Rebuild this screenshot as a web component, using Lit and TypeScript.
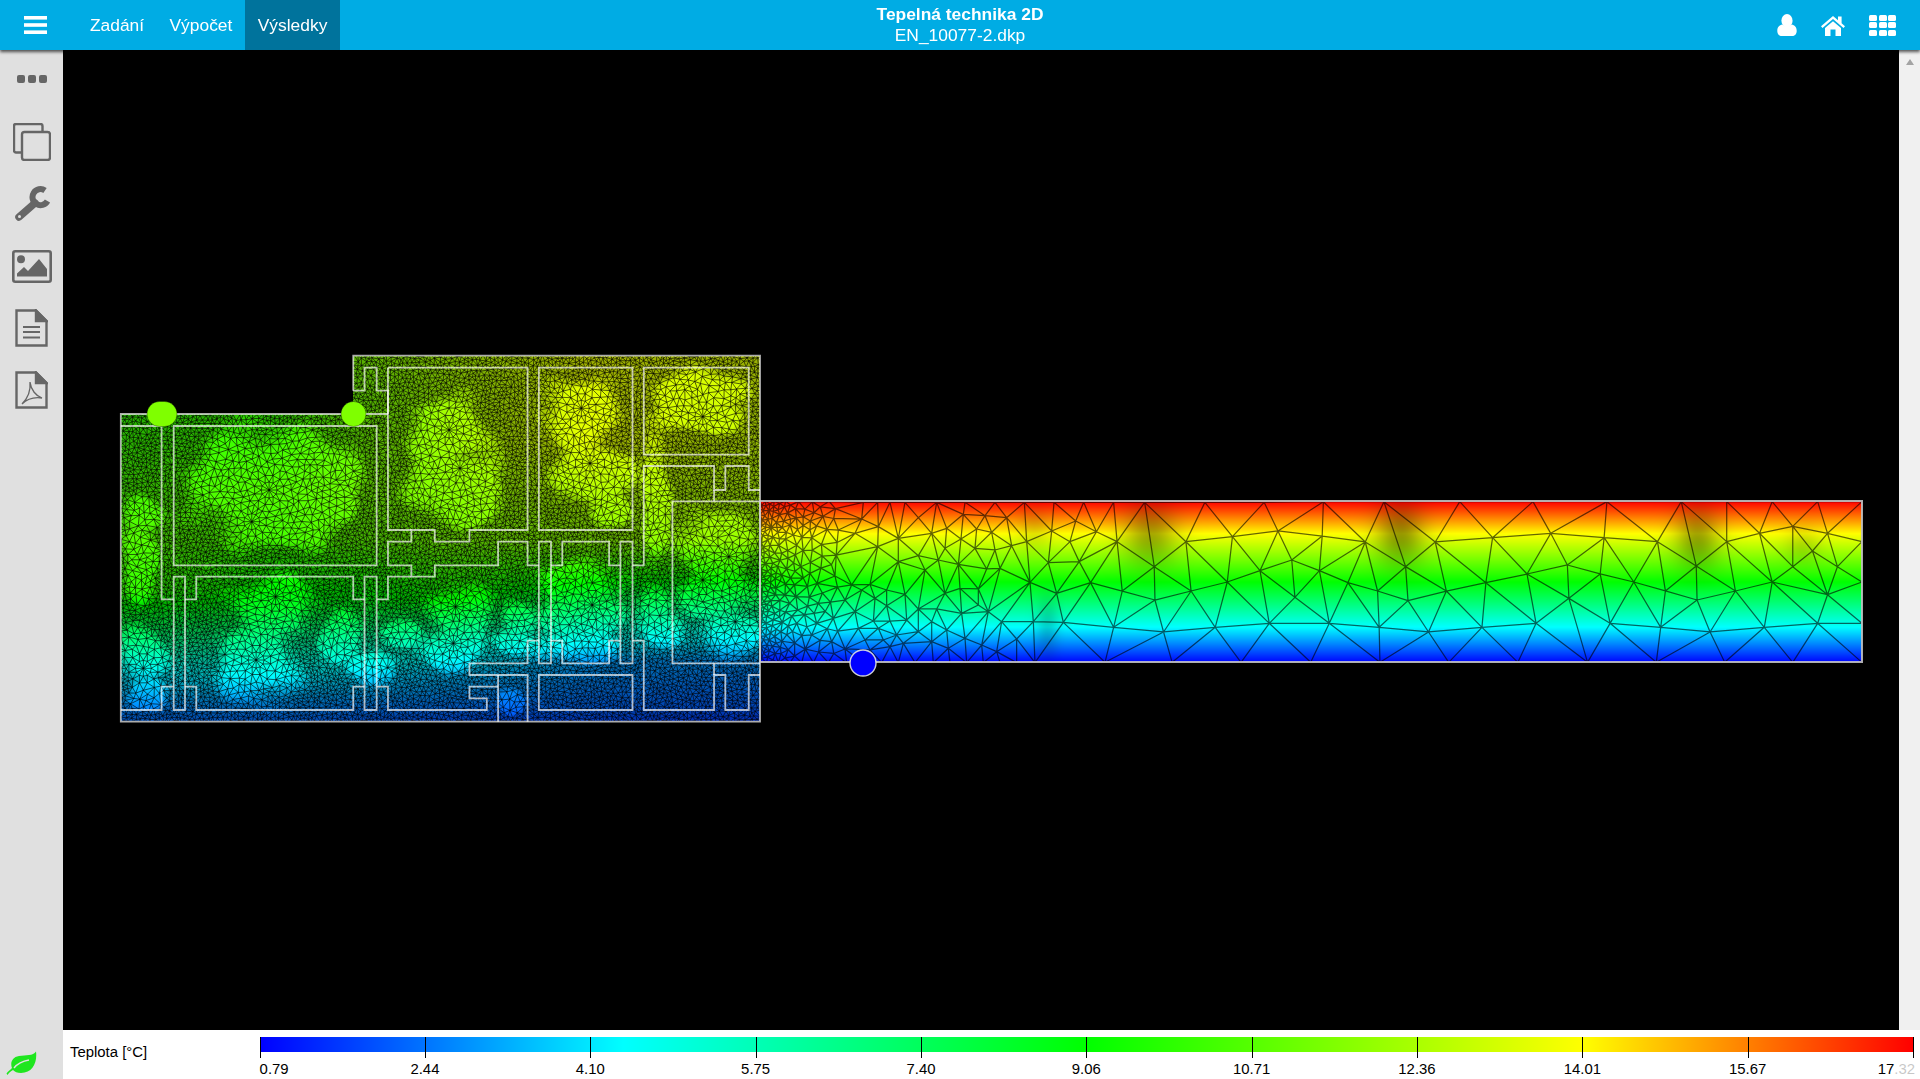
import { LitElement, html, css, svg } from 'lit';
import { customElement } from 'lit/decorators.js';

type P = [number, number];

// canvas origin on the page
const OX = 63;
const OY = 50;

// colour scale of the legend: blue, cyan, green, yellow, red
const STOPS: [number, number, number, number][] = [
  [0, 0, 0, 255],
  [0.22, 0, 255, 255],
  [0.5, 0, 255, 0],
  [0.8, 255, 255, 0],
  [1, 255, 0, 0],
];

function jet(u: number): [number, number, number] {
  if (u <= 0) return [0, 0, 255];
  if (u >= 1) return [255, 0, 0];
  for (let i = 1; i < STOPS.length; i++) {
    if (u <= STOPS[i][0]) {
      const a = STOPS[i - 1];
      const b = STOPS[i];
      const t = (u - a[0]) / (b[0] - a[0]);
      return [a[1] + (b[1] - a[1]) * t, a[2] + (b[2] - a[2]) * t, a[3] + (b[3] - a[3]) * t];
    }
  }
  return [255, 0, 0];
}

function rng(seed: number) {
  let s = seed;
  return () => {
    s = (s * 1664525 + 1013904223) >>> 0;
    return s / 4294967296;
  };
}

// sweep variant of Bowyer-Watson, returns the edges
function delaunay(input: P[]): P[][] {
  const r = rng(7);
  const pts: P[] = input.map((p) => [p[0] + (r() - 0.5) * 0.06, p[1] + (r() - 0.5) * 0.06]);
  pts.sort((a, b) => a[0] - b[0]);
  const n = pts.length;
  pts.push([-20000, -20000], [40000, -20000], [10000, 40000]);
  const circ = (i: number, j: number, k: number) => {
    const [ax, ay] = pts[i];
    const bx = pts[j][0] - ax;
    const by = pts[j][1] - ay;
    const cx = pts[k][0] - ax;
    const cy = pts[k][1] - ay;
    const d = 2 * (bx * cy - by * cx) || 1e-9;
    const ux = (cy * (bx * bx + by * by) - by * (cx * cx + cy * cy)) / d;
    const uy = (bx * (cx * cx + cy * cy) - cx * (bx * bx + by * by)) / d;
    return { i, j, k, x: ax + ux, y: ay + uy, r: ux * ux + uy * uy };
  };
  let open = [circ(n, n + 1, n + 2)];
  const closed: (typeof open)[number][] = [];
  for (let p = 0; p < n; p++) {
    const [px, py] = pts[p];
    const edges = new Map<number, [number, number]>();
    const next: typeof open = [];
    for (const t of open) {
      const dx = px - t.x;
      if (dx > 0 && dx * dx > t.r) {
        closed.push(t);
        continue;
      }
      const dy = py - t.y;
      if (dx * dx + dy * dy < t.r) {
        for (const [a, b] of [[t.i, t.j], [t.j, t.k], [t.k, t.i]]) {
          const key = Math.min(a, b) * 100000 + Math.max(a, b);
          if (edges.has(key)) edges.delete(key);
          else edges.set(key, [a, b]);
        }
      } else next.push(t);
    }
    edges.forEach(([a, b]) => next.push(circ(a, b, p)));
    open = next;
  }
  const out = new Map<number, P[]>();
  for (const t of closed.concat(open)) {
    if (t.i >= n || t.j >= n || t.k >= n) continue;
    for (const [a, b] of [[t.i, t.j], [t.j, t.k], [t.k, t.i]]) {
      out.set(Math.min(a, b) * 100000 + Math.max(a, b), [pts[a], pts[b]]);
    }
  }
  return [...out.values()];
}

// ---- strip on the right, nodes read off the picture ----
const B_X = (zx: number) => 100 + zx / 2.306;
const B_Y = (zy: number) => 340 + zy / 3;

const STRIP_Y0 = 501;
const STRIP_Y1 = 662;

function stripNodes(): P[] {
  const a: P[] = [];
  // left part, 3x crop at 755,495
  const n10: P[] = [
    [325, 22], [368, 22], [405, 22], [450, 22], [545, 22], [630, 22], [720, 22], [808, 22], [897, 22],
    [490, 68], [575, 100], [625, 58], [690, 62], [755, 68], [665, 102], [710, 112], [770, 152], [815, 140],
    [890, 108], [945, 140], [880, 203], [825, 262], [905, 295], [835, 380], [925, 382], [720, 165], [660, 160],
    [570, 160], [618, 132], [530, 115], [490, 182], [430, 130], [368, 155], [370, 95], [320, 72], [300, 115],
    [250, 105], [430, 200], [550, 195], [610, 208], [695, 222], [735, 220], [670, 282], [615, 280], [570, 295],
    [510, 225], [450, 298], [395, 332], [490, 342], [545, 342], [620, 355], [360, 310], [320, 285], [240, 243],
    [290, 270], [270, 315], [345, 268], [395, 285], [300, 350], [355, 378], [405, 378], [455, 375], [530, 380],
    [575, 405], [630, 430], [680, 450], [725, 470], [785, 432], [740, 380], [700, 350], [670, 330], [490, 410],
    [425, 420], [370, 400], [330, 435], [385, 435], [345, 465], [405, 455], [445, 445], [530, 440], [580, 460],
    [270, 462], [310, 400], [235, 370], [190, 325], [165, 235], [128, 345], [95, 222], [115, 120], [185, 385],
    [230, 440], [170, 420], [125, 385], [90, 300],
    [840, 503], [785, 503], [735, 503], [685, 503], [635, 503], [585, 503], [535, 503], [480, 503], [430, 503],
    [380, 503], [325, 503], [275, 503], [220, 503], [175, 503], [140, 503], [105, 503], [70, 503], [35, 503],
  ];
  for (const [x, y] of n10) a.push([755 + x / 3, 495 + y / 3]);
  // middle, crop at 740,480 (x is 2.904 times, y is 3 times)
  const n7: P[] = [
    [998, 67], [1085, 67], [1175, 67], [1350, 67], [1522, 67],
    [975, 123], [1035, 155], [1095, 185], [985, 245], [1018, 308], [1110, 333], [1203, 260], [1205, 360],
    [1085, 442], [1230, 456], [1295, 185], [1430, 170], [1310, 333], [1415, 306], [1510, 272], [1380, 442],
    [1537, 430], [1060, 547], [1255, 547], [1455, 547],
  ];
  for (const [x, y] of n7) a.push([740 + x / 2.904, 480 + y / 3]);
  // right end, crop at 1270,480 (x is 2.529 times, y is 3 times)
  const n8: P[] = [
    [135, 65], [288, 65], [480, 65], [665, 65], [852, 65], [1040, 65], [1155, 65], [1270, 65], [1385, 65], [1497, 65],
    [103, 547], [278, 547], [452, 547], [627, 547], [803, 547], [977, 547], [1150, 547], [1322, 547], [1497, 547],
    [20, 153], [132, 168], [241, 186], [55, 240], [125, 272], [343, 260], [418, 186], [563, 173], [710, 160],
    [845, 173], [980, 185], [752, 255], [650, 282], [835, 282], [197, 308], [272, 333], [349, 362], [446, 333],
    [546, 308], [756, 355], [920, 306], [1000, 333], [1080, 360], [1078, 258], [1155, 185], [1238, 160], [1322, 139],
    [1410, 160], [1372, 213], [1322, 260], [1435, 260], [1497, 185], [1270, 306], [1177, 333], [1410, 344], [1497, 306],
    [63, 352], [150, 430], [276, 442], [401, 456], [536, 442], [673, 430], [860, 430], [988, 442], [1113, 456],
    [1250, 442], [1385, 430], [1497, 430],
  ];
  for (const [x, y] of n8) a.push([1270 + x / 2.529, 480 + y / 3]);
  a.push([760, STRIP_Y0], [760, STRIP_Y1]);

  // fine graded part next to the building
  const r = rng(11);
  for (let i = 0; i < 14000; i++) {
    const x = 760 + r() * 78;
    const y = STRIP_Y0 + r() * (STRIP_Y1 - STRIP_Y0);
    const top = y < 530 ? 1 : 0;
    const k = top ? (x - 760) / 95 : (x - 760) / 66;
    const rad = 3.6 + Math.min(1, k) * 7;
    if (a.every((p) => (p[0] - x) ** 2 + (p[1] - y) ** 2 > rad * rad)) a.push([x, y]);
  }
  return a;
}

const STRIP_SHADE: [number, number, number, number, number][] = [
  [1150, 533, 26, 30, 0.34],
  [1400, 533, 24, 30, 0.4],
  [1697, 537, 22, 30, 0.36],
  [1802, 545, 18, 18, 0.14],
  [1034, 527, 16, 20, 0.12],
  [1047, 628, 11, 30, 0.18],
];

// ---- building ----
// bright spots of the mesh in crop coordinates: x, y, rx, ry
const BLOBS: [number, number, number, number][] = [
  [360, 430, 150, 170], [480, 440, 120, 170], [400, 560, 90, 70], [560, 480, 40, 70],
  [800, 280, 100, 110], [820, 430, 110, 110], [860, 510, 70, 50],
  [1110, 220, 90, 110], [1140, 400, 90, 90], [1180, 510, 50, 50],
  [1380, 160, 100, 70], [1380, 230, 110, 50],
  [90, 650, 40, 130], [100, 530, 45, 60],
  [360, 960, 95, 130], [400, 800, 100, 90],
  [830, 820, 70, 90], [810, 920, 80, 70], [1100, 730, 100, 70], [1110, 830, 90, 80],
  [1420, 620, 95, 110], [1420, 760, 90, 80], [1450, 880, 70, 70],
  [100, 940, 50, 90], [110, 1050, 40, 40],
  [1280, 480, 35, 170], [1280, 800, 40, 60], [960, 840, 40, 60],
  [1100, 920, 100, 50], [1290, 860, 50, 60], [950, 900, 50, 40],
  [950, 1090, 30, 40], [560, 900, 50, 80], [700, 880, 50, 40],
  [100, 1080, 45, 30], [620, 980, 60, 50],
];

const SPOKES: P[] = [
  [390, 450], [350, 545], [805, 270], [830, 385], [1110, 205], [1130, 370], [360, 960], [405, 770],
  [1390, 230], [1450, 650], [1390, 720], [1465, 845], [815, 910], [820, 800], [1135, 795], [100, 985],
];

function blobWeight(x: number, y: number) {
  const zx = (x - 100) * 2.306;
  const zy = (y - 340) * 3;
  // wavy edge, so the patches don't read as balloons
  const wob = 0.14 * Math.sin(x * 0.09 + y * 0.05) + 0.1 * Math.sin(y * 0.13 - x * 0.07);
  let w = 0.2;
  for (const [cx, cy, rx, ry] of BLOBS) {
    const d = Math.hypot((zx - cx) / rx, (zy - cy) / ry) + wob;
    const v = d < 0.75 ? 1 : d < 1.3 ? (1.3 - d) / 0.55 : 0;
    if (v > w) w = v;
  }
  return w;
}

function buildingNodes(): P[] {
  const cell = 8;
  const grid = new Map<number, P[]>();
  const all: P[] = [];
  const add = (p: P) => {
    const k = Math.floor(p[0] / cell) * 10000 + Math.floor(p[1] / cell);
    if (!grid.has(k)) grid.set(k, []);
    grid.get(k)!.push(p);
    all.push(p);
  };
  const free = (x: number, y: number, rad: number) => {
    const cx = Math.floor(x / cell);
    const cy = Math.floor(y / cell);
    for (let i = cx - 1; i <= cx + 1; i++) {
      for (let j = cy - 1; j <= cy + 1; j++) {
        for (const p of grid.get(i * 10000 + j) ?? []) {
          if ((p[0] - x) ** 2 + (p[1] - y) ** 2 < rad * rad) return false;
        }
      }
    }
    return true;
  };
  // fans round the spots where many triangles meet
  for (const [zx, zy] of SPOKES) {
    const cx = B_X(zx);
    const cy = B_Y(zy);
    add([cx, cy]);
    for (let ring = 0; ring < 3; ring++) {
      const count = 12;
      const rad = 8 + ring * 7;
      for (let i = 0; i < count; i++) {
        const a = ((i + (ring % 2) / 2) / count) * Math.PI * 2;
        const x = cx + Math.cos(a) * rad;
        const y = cy + Math.sin(a) * rad;
        if (free(x, y, 4)) add([x, y]);
      }
    }
  }
  const r = rng(3);
  for (let i = 0; i < 200000; i++) {
    const x = 119 + r() * 644;
    const y = 354 + r() * 370;
    if (x < 351 && y < 412) continue;
    if (free(x, y, 2.9 + blobWeight(x, y) * 2.6)) add([x, y]);
  }
  return all;
}

// temperature columns of the building, in crop coordinates
const COLS: [number, P[]][] = [
  [100, [[50, 0.6], [222, 0.56], [600, 0.6], [750, 0.56], [900, 0.36], [1000, 0.21], [1100, 0.12], [1145, 0.09]]],
  [400, [[50, 0.6], [222, 0.56], [450, 0.6], [600, 0.58], [800, 0.46], [960, 0.27], [1080, 0.14], [1145, 0.09]]],
  [800, [[50, 0.7], [300, 0.69], [600, 0.64], [780, 0.5], [900, 0.3], [1000, 0.17], [1100, 0.1], [1145, 0.07]]],
  [1120, [[50, 0.77], [300, 0.77], [600, 0.66], [730, 0.5], [880, 0.26], [960, 0.14], [1100, 0.09], [1145, 0.06]]],
  [1400, [[50, 0.76], [300, 0.74], [600, 0.68], [720, 0.5], [880, 0.24], [960, 0.13], [1100, 0.08], [1145, 0.05]]],
];

function col(tbl: P[], zy: number) {
  if (zy <= tbl[0][0]) return tbl[0][1];
  for (let i = 1; i < tbl.length; i++) {
    if (zy <= tbl[i][0]) {
      const t = (zy - tbl[i - 1][0]) / (tbl[i][0] - tbl[i - 1][0]);
      return tbl[i - 1][1] + (tbl[i][1] - tbl[i - 1][1]) * t;
    }
  }
  return tbl[tbl.length - 1][1];
}

function buildingTemp(x: number, y: number) {
  const zx = (x - 100) * 2.306;
  const zy = (y - 340) * 3;
  if (zx <= COLS[0][0]) return col(COLS[0][1], zy);
  for (let i = 1; i < COLS.length; i++) {
    if (zx <= COLS[i][0]) {
      const t = (zx - COLS[i - 1][0]) / (COLS[i][0] - COLS[i - 1][0]);
      return col(COLS[i - 1][1], zy) * (1 - t) + col(COLS[i][1], zy) * t;
    }
  }
  return col(COLS[COLS.length - 1][1], zy);
}

// wall outlines, crop coordinates of the building picture
const WALLS: [number[], boolean?][] = [
  [[584, 152, 584, 47, 1522, 47, 1522, 1145, 48, 1145, 48, 222, 664, 222]],
  [[170, 258, 638, 258, 638, 676, 170, 676], true],
  [[48, 258, 142, 258, 142, 778, 170, 778]],
  [[196, 778, 222, 778, 222, 710, 584, 710, 584, 778, 610, 778]],
  [[638, 778, 664, 778, 664, 710, 718, 710]],
  [[584, 152, 610, 152, 610, 83, 638, 83, 638, 152, 664, 152, 664, 222]],
  [[664, 83, 986, 83, 986, 570, 852, 570, 852, 605, 772, 605, 772, 570, 718, 570, 718, 605, 664, 605, 664, 676, 718, 676, 718, 710, 772, 710, 772, 676, 918, 676, 918, 605, 986, 605, 986, 676, 1012, 676]],
  [[664, 83, 664, 570, 718, 570]],
  [[170, 710, 196, 710, 196, 1110, 170, 1110], true],
  [[610, 710, 638, 710, 638, 1110, 610, 1110], true],
  [[1012, 605, 1040, 605, 1040, 970, 1012, 970], true],
  [[1200, 605, 1228, 605, 1228, 970, 1200, 970], true],
  [[1012, 83, 1228, 83, 1228, 570, 1012, 570], true],
  [[1254, 83, 1496, 83, 1496, 344, 1254, 344], true],
  [[1522, 450, 1496, 450, 1496, 378, 1442, 378, 1442, 450, 1416, 450, 1416, 378, 1254, 378, 1254, 676, 1228, 676]],
  [[1200, 676, 1174, 676, 1174, 605, 1066, 605, 1066, 676, 1040, 676]],
  [[1416, 450, 1416, 484]],
  [[1522, 484, 1320, 484, 1320, 970, 1522, 970]],
  [[1012, 902, 986, 902, 986, 970, 852, 970, 852, 1005, 986, 1005, 986, 1145]],
  [[918, 1005, 918, 1145]],
  [[1040, 902, 1066, 902, 1066, 970, 1174, 970, 1174, 902, 1200, 902]],
  [[1228, 902, 1254, 902, 1254, 1110, 1416, 1110, 1416, 1005, 1442, 1005, 1442, 1110, 1496, 1110, 1496, 1005, 1522, 1005]],
  [[1416, 970, 1416, 1005]],
  [[1012, 1005, 1228, 1005, 1228, 1110, 1012, 1110], true],
  [[918, 1040, 852, 1040, 852, 1075, 892, 1075, 892, 1110, 664, 1110, 664, 1040, 638, 1040]],
  [[610, 1040, 584, 1040, 584, 1110, 222, 1110, 222, 1040, 196, 1040]],
  [[170, 1040, 142, 1040, 142, 1110, 48, 1110]],
];

function drawPlot(ctx: CanvasRenderingContext2D) {
  ctx.fillStyle = '#000';
  ctx.fillRect(0, 0, ctx.canvas.width, ctx.canvas.height);
  ctx.translate(-OX, -OY);

  const paintField = (x0: number, y0: number, w: number, h: number, fn: (x: number, y: number) => [number, number, number]) => {
    const off = document.createElement('canvas');
    off.width = w;
    off.height = h;
    const c = off.getContext('2d')!;
    const img = c.createImageData(w, h);
    for (let j = 0; j < h; j++) {
      for (let i = 0; i < w; i++) {
        const col = fn(x0 + i, y0 + j);
        const o = (j * w + i) * 4;
        img.data[o] = col[0];
        img.data[o + 1] = col[1];
        img.data[o + 2] = col[2];
        img.data[o + 3] = 255;
      }
    }
    c.putImageData(img, 0, 0);
    ctx.drawImage(off, x0, y0);
  };

  const strokeEdges = (edges: P[][], width: number, alpha: number) => {
    ctx.beginPath();
    for (const [a, b] of edges) {
      ctx.moveTo(a[0], a[1]);
      ctx.lineTo(b[0], b[1]);
    }
    ctx.lineWidth = width;
    ctx.strokeStyle = `rgba(0,0,0,${alpha})`;
    ctx.stroke();
  };

  // building
  ctx.save();
  ctx.beginPath();
  ctx.moveTo(121, 414);
  ctx.lineTo(353, 414);
  ctx.lineTo(353, 356);
  ctx.lineTo(760, 356);
  ctx.lineTo(760, 721);
  ctx.lineTo(121, 721);
  ctx.closePath();
  ctx.clip();
  paintField(120, 355, 642, 368, (x, y) => {
    const c = jet(buildingTemp(x, y));
    const f = 0.62 + 0.38 * blobWeight(x, y);
    return [c[0] * f, c[1] * f, c[2] * f];
  });
  strokeEdges(delaunay(buildingNodes()), 1, 0.62);
  ctx.restore();

  // strip
  ctx.save();
  ctx.beginPath();
  ctx.rect(760, STRIP_Y0, 1102, STRIP_Y1 - STRIP_Y0);
  ctx.clip();
  paintField(760, STRIP_Y0, 1102, STRIP_Y1 - STRIP_Y0 + 1, (x, y) => {
    const c = jet((STRIP_Y1 - y) / (STRIP_Y1 - STRIP_Y0));
    let f = 1;
    for (const [cx, cy, rx, ry, a] of STRIP_SHADE) {
      f *= 1 - a * Math.exp(-(((x - cx) / rx) ** 2) - ((y - cy) / ry) ** 2);
    }
    return [c[0] * f, c[1] * f, c[2] * f];
  });
  ctx.filter = 'blur(0.35px)';
  strokeEdges(delaunay(stripNodes()), 1.25, 0.6);
  ctx.filter = 'none';
  ctx.restore();

  // walls
  ctx.filter = 'blur(0.4px)';
  ctx.lineJoin = 'miter';
  ctx.lineWidth = 1.8;
  ctx.strokeStyle = 'rgba(255,255,255,0.68)';
  for (const [line, closed] of WALLS) {
    ctx.beginPath();
    for (let i = 0; i < line.length; i += 2) {
      const x = B_X(line[i]);
      const y = B_Y(line[i + 1]);
      if (i === 0) ctx.moveTo(x, y);
      else ctx.lineTo(x, y);
    }
    if (closed) ctx.closePath();
    ctx.stroke();
  }
  ctx.strokeStyle = 'rgba(205,205,205,0.85)';
  ctx.lineWidth = 2;
  ctx.strokeRect(760, STRIP_Y0, 1102, STRIP_Y1 - STRIP_Y0);
  ctx.filter = 'none';

  // probes
  const green = '#7fff00';
  const edge = 'rgba(0,0,0,0.3)';
  ctx.beginPath();
  ctx.roundRect(147, 401.5, 30, 25, 12.5);
  ctx.fillStyle = green;
  ctx.fill();
  ctx.strokeStyle = edge;
  ctx.lineWidth = 1;
  ctx.stroke();
  ctx.beginPath();
  ctx.arc(353.5, 414, 12.5, 0, Math.PI * 2);
  ctx.fill();
  ctx.stroke();
  ctx.beginPath();
  ctx.arc(863, 663, 13, 0, Math.PI * 2);
  ctx.fillStyle = '#0000ff';
  ctx.fill();
  ctx.strokeStyle = 'rgba(225,225,225,0.9)';
  ctx.lineWidth = 1.4;
  ctx.stroke();
}

const LABELS = ['0.79', '2.44', '4.10', '5.75', '7.40', '9.06', '10.71', '12.36', '14.01', '15.67', '17.32'];
const TICK_STEP = 165.34;

const ICONS = {
  menu: svg`<rect x="0" y="0" width="23" height="3.6" /><rect x="0" y="7.2" width="23" height="3.6" /><rect x="0" y="14.4" width="23" height="3.6" />`,
  user: svg`<ellipse cx="10" cy="6.7" rx="5.6" ry="6.7" /><path d="M.3 17c0-4 2.2-6 5-6.5 1.3 1.4 2.9 2 4.7 2s3.4-.6 4.7-2c2.8.5 5 2.5 5 6.5 0 3-2 5-4.5 5H4.8C2.3 22 .3 20 .3 17z" />`,
  home: svg`<path d="M0 11.2 12 1l5 4.2V1.400h3.600v6.900L24 11.200l-1.500 1.700L12 4 1.500 12.900z" /><path d="M4 13 12 6.200 20 13v8h-5.500v-6.500h-5V21H4z" />`,
};

@customElement('app-root')
export class AppRoot extends LitElement {
  static styles = css`
    :host {
      display: block;
      height: 100vh;
      font-family: 'Liberation Sans', Arial, sans-serif;
      overflow: hidden;
    }
    .app {
      display: flex;
      flex-direction: column;
      height: 100%;
    }
    .top {
      position: relative;
      z-index: 2;
      flex: 0 0 50px;
      display: grid;
      grid-template-columns: 1fr auto 1fr;
      background: #00ace4;
      color: #fff;
      box-shadow: 0 2px 3px rgba(0, 0, 0, 0.65);
    }
    .left {
      display: flex;
      align-items: stretch;
    }
    .burger {
      display: flex;
      align-items: center;
      padding: 0 30.3px 0 24px;
    }
    .burger svg {
      fill: #fff;
      display: block;
    }
    .tab {
      display: flex;
      align-items: center;
      padding: 0 12.7px;
      font-size: 17.4px;
    }
    .tab.on {
      background: #00739c;
    }
    .title {
      display: flex;
      flex-direction: column;
      align-items: center;
      padding-top: 4px;
      font-size: 17.4px;
      line-height: 21px;
    }
    .title b {
      font-weight: 700;
    }
    .right {
      display: flex;
      align-items: center;
      justify-content: flex-end;
      gap: 24px;
      padding-right: 24px;
    }
    .right svg {
      fill: #fff;
      display: block;
    }
    .waffle {
      display: grid;
      grid-template-columns: repeat(3, 8px);
      grid-auto-rows: 6px;
      gap: 1.5px;
    }
    .waffle i {
      background: #fff;
      border-radius: 1.5px;
    }
    .body {
      flex: 1;
      display: flex;
      min-height: 0;
    }
    .side {
      flex: 0 0 63px;
      display: flex;
      flex-direction: column;
      background: #e0e0e0;
    }
    .dots {
      flex: 0 0 61px;
      box-sizing: border-box;
      display: flex;
      justify-content: center;
      align-items: center;
      gap: 3px;
      padding-bottom: 3px;
    }
    .dots i {
      width: 8px;
      height: 8px;
      background: #666;
      border-radius: 2px;
    }
    .tool {
      flex: 0 0 62px;
      display: flex;
      align-items: center;
      justify-content: center;
    }
    .tool svg {
      display: block;
    }
    .leaf {
      margin-top: auto;
      padding: 0 0 4px 6px;
    }
    .leaf svg {
      display: block;
    }
    .work {
      flex: 1;
      display: flex;
      flex-direction: column;
      min-width: 0;
    }
    .view {
      flex: 1;
      display: flex;
      min-height: 0;
      background: #000;
    }
    canvas {
      display: block;
      width: 1836px;
      height: 980px;
    }
    .scroll {
      flex: 0 0 21px;
      background: #f0f0f0;
      display: flex;
      justify-content: center;
      padding-top: 9px;
      box-sizing: border-box;
    }
    .scroll i {
      width: 0;
      height: 0;
      border-left: 4px solid transparent;
      border-right: 4px solid transparent;
      border-bottom: 6px solid #a3a3a3;
    }
    .legend {
      flex: 0 0 49px;
      display: flex;
      background: #fff;
      color: #000;
      font-size: 14.9px;
    }
    .name {
      flex: 0 0 196.6px;
      box-sizing: border-box;
      padding: 14px 0 0 7px;
      line-height: 17px;
    }
    .scale {
      position: relative;
      width: 1653.4px;
      flex: none;
    }
    .bar {
      margin-top: 7px;
      height: 15px;
      background: linear-gradient(to right, #00f 0%, #0ff 22%, #0f0 50%, #ff0 80%, #f00 100%);
    }
    .tick {
      position: absolute;
      top: 7px;
      width: 1px;
      height: 21px;
      background: #000;
    }
    .lab {
      position: absolute;
      top: 32px;
      line-height: 15px;
      transform: translateX(-50%);
    }
    .lab.first {
      transform: none;
    }
    .lab.last {
      transform: translateX(-100%);
      margin-left: 2px;
    }
    .veil {
      position: absolute;
      left: 1635px;
      top: 30px;
      width: 22px;
      height: 19px;
      background: rgba(255, 255, 255, 0.78);
    }
  `;

  firstUpdated() {
    const cv = this.renderRoot.querySelector('canvas')!;
    drawPlot(cv.getContext('2d')!);
  }

  render() {
    return html`
      <div class="app">
        <header class="top">
          <nav class="left">
            <div class="burger"><svg width="23" height="18" viewBox="0 0 23 18">${ICONS.menu}</svg></div>
            <div class="tab">Zadání</div>
            <div class="tab">Výpočet</div>
            <div class="tab on">Výsledky</div>
          </nav>
          <div class="title"><b>Tepelná technika 2D</b><span>EN_10077-2.dkp</span></div>
          <div class="right">
            <svg width="20" height="22" viewBox="0 0 20 22">${ICONS.user}</svg>
            <svg width="24" height="21" viewBox="0 0 24 21">${ICONS.home}</svg>
            <div class="waffle">${Array.from({ length: 9 }, () => html`<i></i>`)}</div>
          </div>
        </header>
        <div class="body">
          <aside class="side">
            <div class="dots"><i></i><i></i><i></i></div>
            <div class="tool">
              <svg width="38" height="38" viewBox="0 0 38 38" fill="none" stroke="#666" stroke-width="2.4">
                <path d="M8 29.500H3a2 2 0 0 1-2-2V3a2 2 0 0 1 2-2h24.500a2 2 0 0 1 2 2v5" />
                <rect x="9" y="9" width="28" height="28" rx="2.5" />
              </svg>
            </div>
            <div class="tool">
              <svg width="36" height="36" viewBox="0 -2 36 36" fill="none" stroke="#666">
                <path d="M31 2.500A8 8 0 1 0 33.500 13" stroke-width="6" />
                <path d="M21 15 5 29" stroke-width="7.500" stroke-linecap="round" />
                <circle cx="5.500" cy="28.500" r="1.500" fill="#e0e0e0" stroke="none" />
              </svg>
            </div>
            <div class="tool">
              <svg width="40" height="33" viewBox="0 0 40 33">
                <rect x="1.3" y="1.3" width="37.4" height="30.4" rx="2" fill="none" stroke="#666" stroke-width="2.6" />
                <circle cx="9" cy="9.3" r="4" fill="#666" />
                <path d="M5 26.500v-3l7-6.500 4 4 11-12 8 10v7.500z" fill="#666" />
              </svg>
            </div>
            <div class="tool">
              <svg width="33" height="38" viewBox="0 0 33 38" fill="none" stroke="#666" stroke-width="2.4">
                <path d="M1.500 1.500H21L31.500 12v24.500h-30z" />
                <path d="M21 1.500V12h10.500z" fill="#666" />
                <path d="M8 18h17M8 23h17M8 28.500h17" stroke-width="2" />
              </svg>
            </div>
            <div class="tool">
              <svg width="33" height="38" viewBox="0 0 33 38" fill="none" stroke="#666" stroke-width="2.4">
                <path d="M1.500 1.500H21L31.500 12v24.500h-30z" />
                <path d="M21 1.500V12h10.500z" fill="#666" />
                <path d="M7 33C12 28 16 21 15 11c1 8 6 14 12 16-7-1-14 0-20 6z" stroke-width="1.3" />
              </svg>
            </div>
            <div class="leaf">
              <svg width="31" height="24" viewBox="0 0 31 24">
                <path d="M30 .5c1.500 11-3.500 21.500-15 21.500-4 0-6-1-8-3-3 1.500-4.500 3.500-5.500 5L.5 22.500c1.500-2 3.500-3.500 5.500-5.500C4 12 6 6 13 5c7-1 14 0 17-4.500z" fill="#1fe61f" />
                <path d="M8 17c4-5 9-7 15-8" fill="none" stroke="#e0e0e0" stroke-width="1.4" />
              </svg>
            </div>
          </aside>
          <main class="work">
            <div class="view">
              <canvas width="1836" height="980"></canvas>
              <div class="scroll"><i></i></div>
            </div>
            <div class="legend">
              <div class="name">Teplota [°C]</div>
              <div class="scale">
                <div class="bar"></div>
                ${LABELS.map((l, i) => html`
                  <div class="tick" style="left:${i * TICK_STEP}px"></div>
                  <div class="lab ${i === 0 ? 'first' : i === 10 ? 'last' : ''}" style="left:${i * TICK_STEP}px">${l}</div>
                `)}
                <div class="veil"></div>
              </div>
            </div>
          </main>
        </div>
      </div>
    `;
  }
}
